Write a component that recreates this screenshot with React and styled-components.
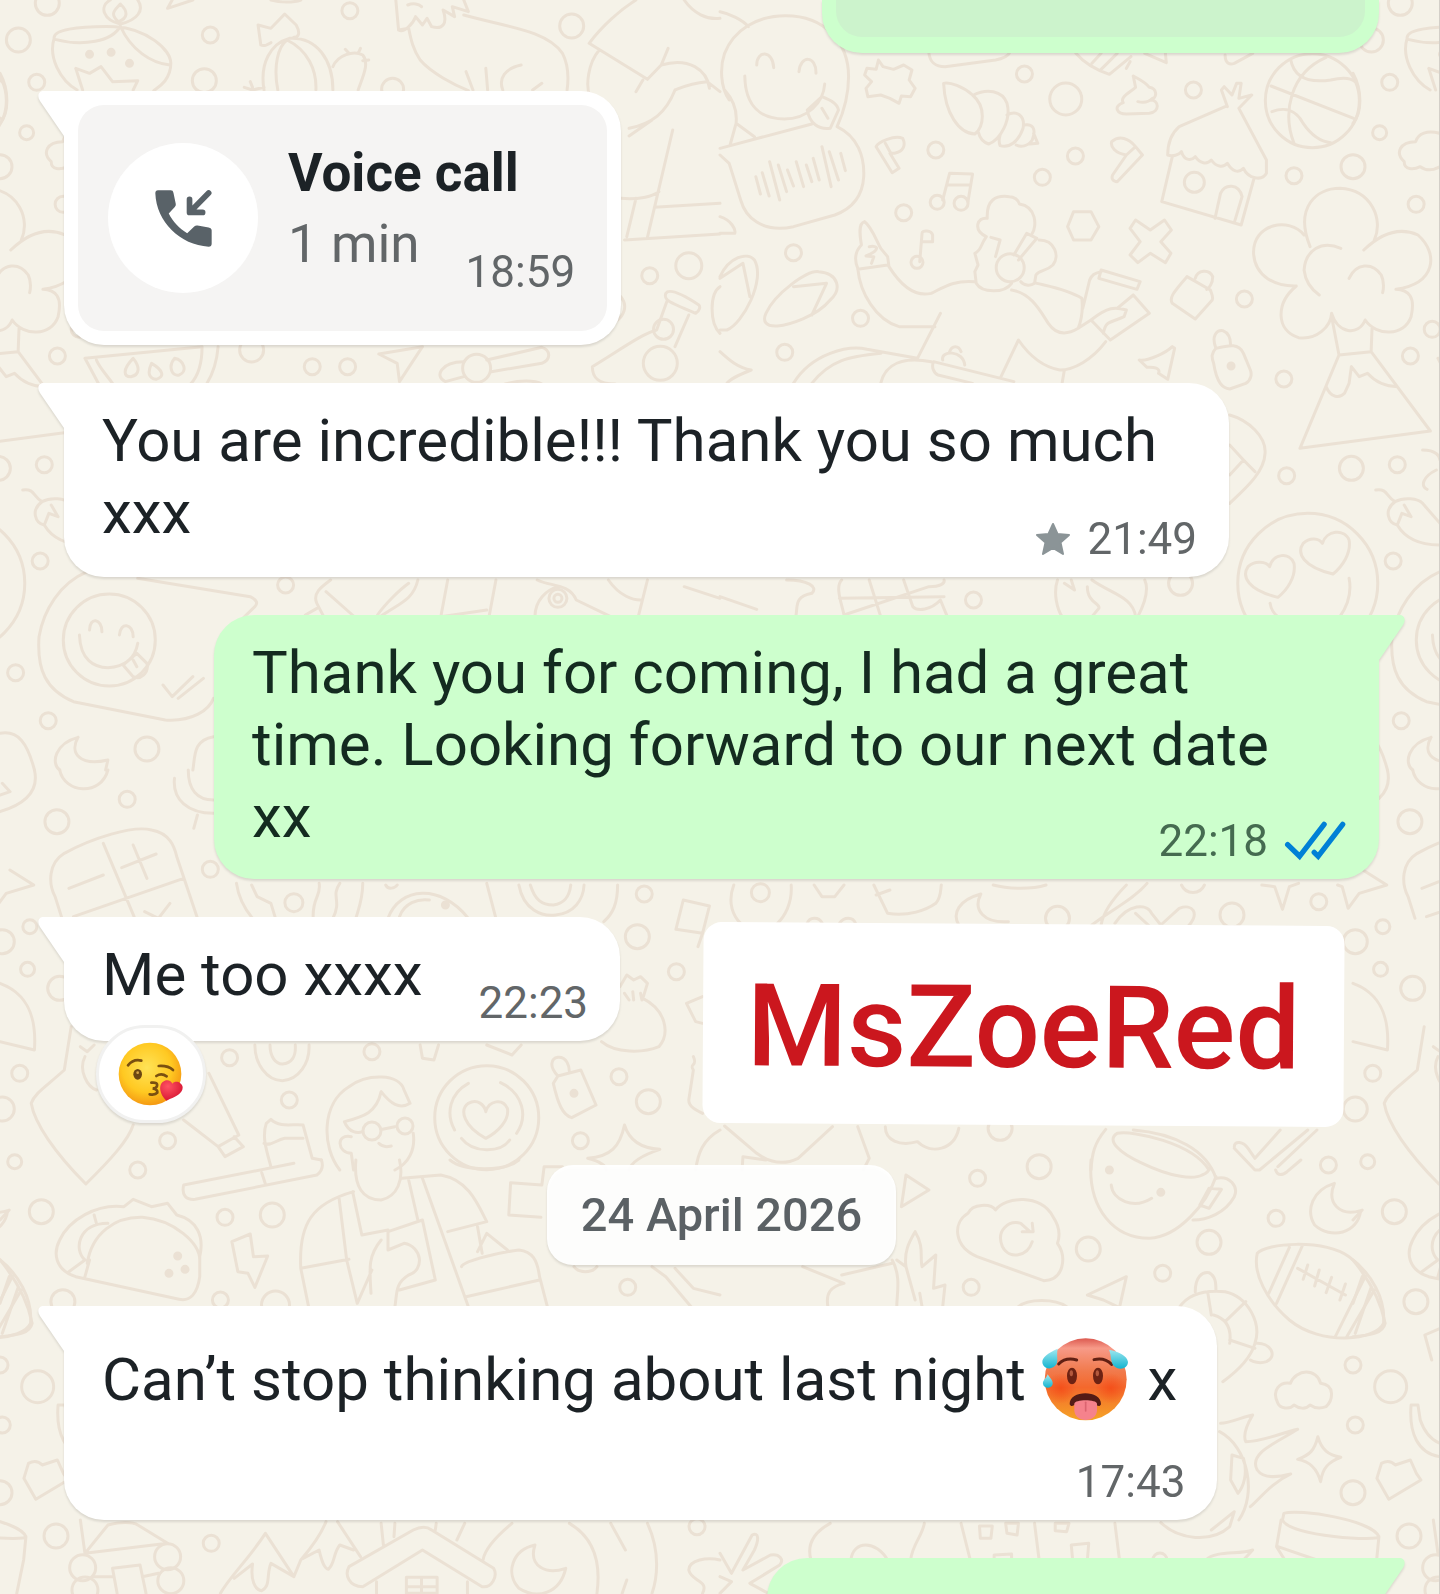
import React from 'react'
import styled, { createGlobalStyle, css } from 'styled-components'

const GlobalStyle = createGlobalStyle`
  * {
    box-sizing: border-box;
  }
  body {
    margin: 0;
    background: #f5f2e8;
    font-family: Roboto, 'Noto Sans', sans-serif;
  }
`

const Page = styled.main`
  position: relative;
  height: 100vh;
  overflow: hidden;
  background: #f5f2e8;
  border-right: 1px solid #d3cfc8;
`
const Wallpaper = styled.svg`
  position: absolute;
  inset: 0;
  width: 100%;
  height: 100%;
  fill: none;
  stroke: #ebe1d4;
  stroke-width: 3;
  stroke-linecap: round;
  stroke-linejoin: round;

  path {
    vector-effect: non-scaling-stroke;
  }
`
const Thread = styled.div`
  position: relative;
  display: flex;
  flex-direction: column;
  gap: 38px;
  padding: 0 60px 0 64px;
`
const Row = styled.div`
  display: flex;
  align-items: flex-start;
  justify-content: ${(p) => (p.$out ? 'flex-end' : 'flex-start')};
`
const Bubble = styled.article`
  position: relative;
  display: flex;
  flex-direction: ${(p) => (p.$inline ? 'row' : 'column')};
  gap: ${(p) => (p.$inline ? '56px' : '0')};
  max-width: min(100%, 1165px);
  padding: 22px 32px 12px 38px;
  border-radius: ${(p) => (p.$out ? '40px 0 40px 40px' : '0 40px 40px 40px')};
  background: ${(p) => (p.$out ? '#cdffcd' : '#ffffff')};
  color: ${(p) => (p.$out ? '#142b20' : '#1c2226')};
  filter: drop-shadow(0 2px 1px rgba(60, 50, 40, 0.14));
`
const TailShape = styled.svg`
  position: absolute;
  top: 0;
  width: 30px;
  height: 46px;
  ${(p) =>
    p.$out
      ? css`
          right: -26px;
          transform: scaleX(-1);
          fill: #cdffcd;
        `
      : css`
          left: -26px;
          fill: #ffffff;
        `}
`
const Text = styled.p`
  margin: 0;
  padding-top: ${(p) => (p.$roomy ? '16px' : '0')};
  padding-right: ${(p) => (p.$wide ? '30px' : p.$roomy ? '8px' : '0')};
  font-size: 60px;
  line-height: 72px;
`
const Meta = styled.div`
  display: flex;
  align-items: center;
  align-self: flex-end;
  gap: 16px;
  margin-top: ${(p) => p.$top}px;
  color: ${(p) => (p.$out ? '#456b50' : '#626668')};
  font-size: 44px;
  line-height: 52px;
`

/* call card */
const CallBubble = styled(Bubble)`
  padding: 14px;
`
const CallCard = styled.div`
  display: flex;
  align-items: center;
  gap: 30px;
  min-height: 226px;
  padding: 33px 32px 33px 30px;
  border-radius: 26px;
  background: #f5f4f3;
`
const CallIcon = styled.div`
  display: flex;
  align-items: center;
  justify-content: center;
  width: 150px;
  height: 150px;
  border-radius: 50%;
  background: #ffffff;
`
const CallInfo = styled.div`
  align-self: flex-start;
  line-height: 71px;
  font-size: 53px;
`
const CallTitle = styled.h2`
  margin: 0;
  font-size: 53px;
  font-weight: 700;
`
const CallLine = styled.div`
  display: flex;
  align-items: flex-end;
  gap: 46px;
  height: 71px;
  color: #626668;
`
const CallTime = styled(Meta)`
  margin-bottom: -18px;
`

const CutBubble = styled.div`
  width: 557px;
  padding: 0 14px 16px;
  border-radius: 0 0 40px 40px;
  background: #cdffcd;
  filter: drop-shadow(0 2px 1px rgba(60, 50, 40, 0.14));
`
const CutCard = styled.div`
  height: 37px;
  border-radius: 0 0 26px 26px;
  background: #ccf3cc;
`
const NextBubble = styled(Bubble)`
  width: 612px;
  min-height: 124px;
`

const Reaction = styled.button`
  position: absolute;
  left: 32px;
  top: calc(100% - 16px);
  display: flex;
  align-items: center;
  justify-content: center;
  width: 110px;
  height: 98px;
  padding: 0;
  border: 3px solid #f1f1f0;
  border-radius: 49px;
  background: #ffffff;
`
const InlineEmoji = styled.svg`
  width: 88px;
  height: 84px;
  margin: -12px 4px -12px 0;
  vertical-align: -9px;
`
const NameTag = styled.div`
  display: flex;
  align-items: center;
  justify-content: center;
  width: 641px;
  height: 201px;
  margin: 7px 35px 0 auto;
  padding-top: 6px;
  border-radius: 18px;
  background: #ffffff;
  color: #cb171e;
  font-size: 115px;
  font-weight: 500;
  transform: rotate(0.36deg);
`
const DateChip = styled.time`
  align-self: center;
  margin: 2px 0 3px;
  padding: 0 34px;
  border-radius: 26px;
  background: rgba(255, 255, 255, 0.94);
  color: #5b6165;
  font-size: 47px;
  font-weight: 500;
  line-height: 100px;
  filter: drop-shadow(0 2px 1px rgba(60, 50, 40, 0.14));
`

/* Wallpaper sheets: x/y is the sheet origin on the page, everything in it is
   drawn on a finer grid (see GRID_X, GRID_Y). rings are [x, y, radius]. */
const GRID_X = 720 / 1568
const GRID_Y = 1 / 3
const TILE = 1353

const sheets = [
  {
    x: 0,
    y: 0,
    rings: [[40, 120, 12], [80, 247, 8], [103, 10, 12], [458, 105, 8], [445, 242, 12], [762, 32, 8], [855, 268, 11], [1245, 78, 12], [58, 398, 7], [0, 500, 12], [125, 1068, 8], [548, 1050, 12], [680, 1100, 8], [757, 1100, 8], [1500, 797, 13], [1415, 827, 8], [1038, 1105, 14], [1445, 988, 10], [1438, 1090, 17]],
    dots: [[195, 163], [242, 157], [282, 190]],
    d: [
      'M118 115C115 90 165 78 250 80C320 85 372 150 372 190C372 240 345 262 335 272M118 115C105 170 130 240 168 270M120 118C180 140 245 125 262 78C285 150 330 190 370 195',
      'M262 72C225 60 215 20 240 0M262 72C300 60 315 30 300 0M258 65C235 40 255 25 262 12C280 35 278 55 258 65M180 270L165 205L195 220L220 200L245 245L300 242L290 270',
      'M375 0L365 25L420 0M590 0C610 8 640 8 655 0',
      'M575 270C565 190 590 130 630 115C690 110 725 180 725 270M605 270C595 200 605 140 625 120C670 150 690 210 688 270M590 128C582 135 575 140 568 135L562 75L590 85L620 42L645 75C655 100 650 112 640 112',
      'M725 200C735 165 770 150 790 165C805 190 790 230 780 270M752 148L760 160M785 145L780 160M803 180L790 182M532 262L550 270L575 262M545 245L550 262',
      'M862 0L868 90L890 85C895 120 900 150 915 180C940 220 990 255 1020 272M888 15C900 8 912 12 918 20M868 90C880 100 900 70 905 50L920 75L930 55L940 80C965 90 975 70 965 30L990 50L985 20L1020 35L1010 0',
      'M1010 45C1100 80 1190 90 1225 160C1240 200 1238 240 1235 270M1015 215L1030 270M1058 205L1062 270M1135 195C1100 205 1085 235 1095 270M1180 250L1160 270',
      'M1385 0C1350 30 1310 80 1283 130L1410 238L1440 195C1500 170 1540 210 1545 265M1385 275L1400 240M1305 150C1280 190 1275 260 1285 290M1455 145L1440 195M1490 0C1510 40 1540 60 1568 55',
      'M1568 275L1540 245C1500 250 1480 265 1470 270C1450 340 1420 370 1370 385M1370 408L1420 360M1465 390L1410 712M1385 595L1365 710M1352 595C1390 600 1420 590 1435 575M1360 720L1568 702M1425 622L1568 610',
      'M0 220C20 270 20 340 0 370',
      'M185 1075L440 1040C440 1090 430 1130 415 1152M185 1075L215 1152M475 1040C472 1090 460 1130 450 1152M210 1080C215 1100 235 1130 245 1150M290 1075C265 1110 270 1130 285 1130C305 1125 305 1100 290 1075ZM330 1090C320 1120 325 1135 340 1138C360 1130 355 1110 330 1090ZM380 1075C365 1100 375 1130 390 1125C410 1115 400 1080 380 1075Z',
      'M825 1062L920 1040L870 1145L865 1090ZM1060 1080L1180 1042C1200 1050 1200 1080 1180 1090L1070 1115M1010 1085C960 1085 945 1130 970 1145L1010 1130M1100 1152C1130 1140 1165 1140 1180 1152',
      'M1450 880C1445 900 1455 905 1515 940C1525 930 1525 920 1522 915C1470 868 1455 870 1450 880ZM1452 905L1430 990C1400 1000 1350 1050 1290 1100C1290 1130 1300 1152 1340 1152M1500 945L1470 1040M1352 890C1370 920 1355 950 1345 960M1568 860C1545 880 1545 970 1568 1000',
    ],
  },
  {
    x: 720,
    y: 0,
    rings: [[663, 222, 8], [753, 297, 16], [1031, 270, 8], [470, 450, 8], [774, 468, 8], [702, 532, 8], [400, 638, 8], [160, 758, 8], [1250, 527, 8], [1516, 613, 8], [1142, 897, 8], [306, 955, 8], [141, 1057, 8], [1228, 1137, 8], [1551, 988, 8], [1033, 547, 10], [1290, 302, 47], [473, 607, 7], [525, 610, 7], [429, 787, 6], [632, 803, 14]],
    dots: [[1113, 1098]],
    d: [
      'M20 300C0 260 0 200 10 160C30 90 80 47 143 47C230 47 280 130 280 230C280 290 268 340 255 380M80 195C80 150 115 150 117 203M172 215C175 165 210 165 209 220M54 228C55 320 90 357 140 357C190 357 225 310 228 252M190 330L222 290C240 300 255 310 258 330L240 385C215 390 195 370 190 330ZM222 325L235 355',
      'M0 35C20 40 50 60 62 80M10 270C30 300 38 330 35 370L22 435M35 370L75 410M0 445L200 372M255 380C300 410 315 470 313 530C310 600 280 630 250 645L160 680C90 700 55 650 45 600L20 490L0 465',
      'M78 530L88 582M92 518L107 588M108 485L130 600M127 495L145 575M147 510L160 558M166 485L182 560M188 495L200 545M203 475L216 540M222 440L242 560M238 455L258 540M263 460L273 512',
      'M345 180L355 200L378 208L400 195L418 210L412 240L425 265L415 290L395 288L390 310L370 295L350 285L322 290L318 265L330 245L315 225L320 205L340 208Z',
      'M455 160C458 190 470 200 490 200L600 180C620 175 628 165 630 160M775 160C800 200 830 215 848 223L895 170M810 190L830 160M830 208L865 160M885 205L893 185M925 160L972 188L970 160M1100 165C1100 190 1110 195 1120 190L1160 160',
      'M487 250C500 245 530 260 550 285C580 320 575 380 555 402C520 400 490 340 487 250ZM552 285C580 265 615 270 625 310C635 360 610 420 585 432C570 425 565 410 563 398M625 345C645 330 665 345 660 385C650 425 630 445 610 437C605 420 610 410 610 405M662 375C680 370 690 385 680 420C670 440 655 442 645 435M683 400L692 430L675 432',
      'M900 228L905 262C895 275 870 290 878 308C855 320 865 342 885 342L935 340C960 335 955 300 938 300C955 290 950 265 935 262C925 245 915 240 900 228M910 305C925 310 935 305 942 295',
      'M1100 320L1000 380C975 410 975 450 975 465C985 470 1000 465 1005 455C1010 480 1025 485 1035 470C1045 490 1060 495 1070 480C1080 500 1095 505 1105 490C1115 515 1130 520 1140 505C1150 535 1180 545 1190 520L1190 480L1130 325L1158 285L1130 295L1135 250L1125 250L1115 285L1098 260L1092 270L1105 320M985 470L962 605L1135 675L1162 540M1078 655L1090 580C1100 550 1130 550 1137 590L1120 668',
      'M1243 180C1250 230 1280 250 1330 240C1360 230 1375 235 1383 245M1200 258L1380 355M1320 172C1240 220 1225 340 1250 430M1202 335C1230 320 1255 330 1270 370C1290 410 1310 425 1330 428',
      'M1568 400C1540 390 1520 400 1515 425C1480 425 1470 460 1490 485C1490 510 1510 510 1525 500C1540 515 1555 510 1568 500',
      'M340 440C345 425 380 405 398 415C405 435 400 455 380 460L370 460L390 505L375 518ZM360 430L372 460M920 465L865 545C855 545 852 535 855 525L885 465C860 460 850 440 853 425C870 405 890 415 905 440ZM885 465L905 440',
      'M485 600L500 520L550 522L540 605M498 555L545 555M435 785L440 700C440 690 460 690 463 705L463 725L440 725M770 635L808 635L825 680L808 720L770 720L757 680Z',
      'M905 660L937 690L968 660L983 690L960 725L982 760L970 788L937 760L910 788L893 765L915 725L893 685Z',
      'M1017 830C985 880 978 895 985 910L1035 957L1072 900C1075 890 1070 880 1068 870ZM1035 835C1040 810 1065 805 1073 830C1073 850 1065 865 1060 868M1080 1045C1070 1060 1070 1070 1075 1090C1082 1150 1095 1165 1110 1167L1145 1150C1158 1140 1158 1120 1155 1110L1140 1060C1130 1030 1110 1035 1080 1045ZM1080 1045C1070 1010 1080 990 1095 992C1110 1000 1112 1020 1112 1035',
      'M913 1080C930 1085 970 1060 985 1040L990 1045L975 1138L955 1120C960 1105 945 1100 930 1102Z',
      'M0 830C20 770 60 755 75 780C100 840 50 970 15 990L0 990M0 835L50 790L65 890M100 940C120 880 190 810 215 815C260 820 265 870 240 900C210 950 150 975 125 978C100 980 92 965 100 940ZM160 860L232 850L200 945M0 650C25 660 35 690 32 700L0 700',
      'M315 665C330 680 340 720 350 745L365 770L368 800C400 870 430 890 460 880C490 860 510 840 555 845M315 665C300 670 305 710 308 735C290 760 295 790 300 805C305 880 340 960 390 980L468 980M300 808L365 795M325 740C345 735 350 750 318 768L335 770L330 790M480 940L430 1075',
      'M580 710C550 690 560 650 582 655C580 600 600 585 630 590C640 590 650 600 652 612C690 620 690 680 680 700M580 710C565 740 570 750 555 760L562 795L555 815L558 850C570 880 620 880 635 850M590 712L610 720L600 770M640 765L668 700L690 715L650 780M695 720C730 720 740 770 725 795C710 815 695 810 688 825L685 850C675 860 660 855 655 845',
      'M635 870C680 880 700 940 715 970C730 1000 750 1010 780 985C790 950 790 920 788 895C760 870 720 860 690 850M790 925L805 840C810 825 815 820 830 815M830 810L915 845L908 868L825 835ZM780 985L808 960M900 885L935 940L850 1020L808 960M835 1000C840 960 850 970 880 950L885 930C860 920 845 920 808 960M900 885L865 925M840 1025C810 1080 770 1110 740 1110C700 1100 670 1060 650 1020L612 1130M750 1110L745 1150',
      'M160 1150C200 1060 280 1035 320 1048L430 1075M200 1150C240 1080 280 1070 350 1060M350 1150C360 1090 400 1070 460 1085M640 1145L465 1085C460 1100 465 1120 475 1125L550 1150M485 1080C480 1050 530 1050 533 1095M500 1055C505 1035 520 1035 525 1055M0 1055C20 1080 40 1105 68 1110C40 1125 20 1140 15 1150',
      'M1285 740C1250 620 1300 565 1350 565C1420 570 1445 660 1425 720M1272 705C1240 650 1160 670 1162 760C1165 830 1210 860 1255 858C1210 910 1210 990 1260 1013C1300 1020 1330 980 1332 940C1345 1000 1390 1010 1405 960C1430 1010 1490 1010 1505 950C1515 890 1500 870 1472 868C1560 850 1565 760 1520 705C1480 680 1440 700 1402 750M1352 745C1310 720 1275 750 1272 810C1275 850 1290 870 1305 885M1370 835C1385 790 1420 785 1440 825C1447 845 1445 870 1443 878',
      'M1332 950L1348 1065L1418 1055L1420 985M1348 1065L1263 1345L1547 1293L1418 1055M1375 1100L1370 1150L1360 1180C1350 1195 1330 1195 1320 1160M1375 1100L1392 1130L1410 1120C1430 1150 1450 1160 1475 1160',
    ],
  },
  {
    x: 0,
    y: 370,
    rings: [[34, 908, 8], [105, 1052, 8], [320, 1137, 12], [622, 645, 8], [238, 810, 46], [1215, 685, 9], [1215, 685, 4]],
    dots: [],
    d: [
      'M190 605C130 640 95 720 85 800C80 900 100 960 160 995L360 1050C420 1055 455 1020 465 985M300 625L545 680C560 690 562 700 555 710L525 750M195 780C195 740 222 745 222 785M260 795C262 755 290 760 290 800M173 795C175 870 205 893 235 893C275 890 295 860 300 820M268 885L298 850L320 880C325 910 305 930 290 920ZM290 870L298 890M355 945L375 980L420 920M388 985L443 925',
      'M0 1090C40 1080 60 1120 75 1200M170 1102C120 1120 110 1180 130 1200M170 1102C150 1150 175 1190 235 1170L230 1200M465 1100C420 1110 425 1160 420 1200',
      'M720 630C700 650 680 670 690 700L705 740M710 665L770 738M665 735L690 715M910 630C900 690 870 700 830 738M890 640C870 660 840 700 822 735M975 630L960 740L1060 720M1080 630L1065 740',
      'M1170 630C1200 650 1240 640 1255 690L1330 740M1165 740C1165 690 1190 660 1215 650M1325 630C1350 680 1380 690 1395 690M1410 630L1390 740M1490 650L1568 685',
    ],
  },
  {
    x: 720,
    y: 370,
    rings: [[1375, 295, 12], [1475, 284, 8], [1234, 317, 8], [1466, 573, 8], [1280, 640, 70], [552, 690, 8], [1003, 640, 12]],
    dots: [],
    d: [
      'M1428 360C1455 355 1450 380 1470 395C1445 420 1455 460 1475 465C1490 500 1520 525 1568 525M1470 395C1490 380 1520 385 1530 400L1568 460M1490 405L1505 440L1485 430L1475 465M1530 240C1560 240 1568 260 1568 270M1560 300C1530 320 1525 350 1540 358',
      'M1215 682C1150 660 1135 620 1150 590C1165 570 1190 575 1197 590C1205 550 1240 545 1250 580C1255 620 1235 660 1215 682ZM1335 612C1270 590 1255 550 1270 520C1285 500 1305 505 1312 520C1320 480 1360 475 1370 510C1375 550 1355 590 1335 612ZM1198 700C1200 720 1210 735 1215 740M1370 625C1375 660 1370 700 1350 740',
      'M0 680L80 718M145 630C190 630 215 650 200 670C160 680 170 710 165 740M265 630C250 650 265 700 270 735L455 650C480 650 490 640 488 630M325 630L350 740M260 685L488 680M400 630L420 710C430 725 460 720 480 690L495 740',
      'M735 630C725 670 735 720 745 740M765 630L772 660L750 640M800 650C800 700 830 700 825 715L810 740M810 630C850 670 900 680 905 740M925 630C935 660 925 700 910 740',
      'M1110 135C1150 150 1190 200 1187 250C1185 310 1140 360 1110 400M1110 315L1140 270L1165 305M1110 225L1140 270',
    ],
  },
  {
    x: 0,
    y: 770,
    rings: [[124, 155, 12], [277, 88, 8], [458, 298, 8], [60, 598, 7], [5, 515, 12], [65, 470, 7], [130, 655, 12], [43, 910, 8], [5, 1017, 12], [365, 1112, 8], [32, 1175, 7], [500, 863, 8], [630, 990, 8], [810, 845, 8], [1403, 372, 8], [1388, 500, 12], [1473, 605, 8], [1412, 995, 12], [1348, 920, 8], [1264, 1112, 8], [640, 398, 9], [810, 1083, 9], [882, 1068, 8], [1060, 1043, 52]],
    dots: [[970, 405], [1250, 970]],
    d: [
      'M75 0C85 60 60 100 0 125M5 40L22 65L0 75M130 0C140 70 220 80 235 0M380 25C375 90 410 130 465 130M410 0C410 60 430 90 465 90M430 135L422 175',
      'M140 250C200 205 290 165 330 180C370 190 380 230 385 260L430 445M140 250C105 280 105 340 120 380L135 445M225 220L292 440M160 440L400 325M150 355L225 315M265 293L340 252M290 225L320 325M315 425L345 445L370 400',
      'M515 340C520 390 535 420 550 445M548 345L560 380L590 400L600 445M695 340C700 380 680 380 682 445M740 340C720 380 745 390 725 445M790 340C790 390 780 420 775 445M840 345C845 360 860 355 865 345M845 445C870 350 960 340 1020 445M870 440C880 400 910 385 935 390M1060 340L1080 445',
      'M1130 345C1140 420 1180 440 1210 435C1250 430 1270 390 1272 345M1155 345C1165 390 1180 405 1205 405C1230 400 1240 380 1243 345M1345 345C1345 400 1335 430 1315 455M1488 390L1545 408L1530 490L1472 478ZM1530 490L1520 530M1530 680L1495 700L1515 755L1530 760',
      'M1350 650L1365 615L1380 630L1395 620L1410 640L1400 685C1450 720 1460 790 1435 830C1400 850 1340 850 1310 815M1360 670L1370 690M1378 665L1380 690M1395 670L1398 690',
      'M740 1200C700 1130 700 1000 760 950C800 910 870 910 880 960L893 1000C870 1020 850 1000 830 965C820 1030 790 1040 750 1055C760 1090 780 1090 790 1085M833 1078L860 1070M765 1100C730 1090 735 1150 765 1150L770 1200M900 1090C905 1140 890 1180 860 1200M825 1120C835 1135 845 1130 852 1128',
      'M1058 1105C1010 1070 1000 1020 1020 1000C1040 985 1055 1005 1058 1025C1065 990 1095 985 1105 1015C1110 1050 1085 1085 1058 1105ZM1020 940C980 970 970 1030 990 1080M1090 938C1140 970 1150 1040 1125 1090M1005 1105C1030 1150 1090 1150 1110 1110',
      'M1215 918C1195 890 1200 865 1215 862C1235 860 1240 890 1240 905M1215 918L1265 900L1298 1005L1245 1043C1225 1035 1215 1000 1205 940ZM555 825C555 880 580 932 615 932C650 930 675 880 673 825M588 825C588 860 600 882 615 882C635 880 645 860 643 825M915 825L920 865L945 870L955 825M1060 825L1115 855L1135 825',
      'M155 770L140 900C100 950 75 970 68 1000C75 1060 120 1150 187 1242C240 1170 280 1110 290 1065M400 1050L475 1130L520 1095L455 910M475 1130L490 1160L530 1130L510 1100M175 830L190 845L205 825M185 860C170 900 190 950 210 960M0 640C60 670 80 740 75 840L0 815',
      'M590 1190C580 1140 570 1100 580 1060L590 1048C610 1075 640 1060 660 1065L680 1165L700 1170M575 1120C590 1130 600 1110 620 1105L660 1105M1510 860C1520 890 1500 880 1510 900L1500 990C1500 1010 1515 1020 1530 1030',
      'M1320 1200C1320 1190 1310 1175 1280 1165C1330 1160 1350 1130 1360 1065C1370 1110 1395 1135 1437 1138C1400 1155 1375 1175 1370 1200M1568 1080C1530 1110 1520 1150 1515 1200',
    ],
  },
  {
    x: 720,
    y: 770,
    rings: [[88, 368, 9], [735, 445, 12], [1115, 435, 12], [1304, 395, 8], [610, 1075, 12]],
    dots: [],
    d: [
      'M30 345C15 400 30 440 45 460M155 345C158 400 140 440 125 460M205 345L222 380L250 380L270 345M335 345L365 430C410 440 450 420 470 400C482 380 480 360 482 345M340 375L370 360M595 345C630 358 680 358 710 345M568 372C520 390 505 430 520 465M568 372C550 420 575 460 628 455M190 460C195 440 215 440 222 458M260 460C270 440 290 440 295 460',
      'M930 340C900 390 850 420 810 465M885 345C860 380 835 420 830 465M860 460C890 400 930 400 940 430L960 465L1000 415C1030 400 1045 430 1020 468M905 430L935 468M1005 345C1015 375 1045 375 1055 345M1180 345L1208 350L1225 418L1240 350L1260 340M1345 345L1355 350L1368 415L1392 370L1452 345L1400 300',
      'M10 1068L80 1150C110 1180 140 1185 170 1165L245 1070M300 1070L325 1165L312 1200M360 1070C360 1110 390 1130 430 1115C460 1155 510 1140 520 1075M48 1200L50 1160L100 1170',
      'M840 1078C815 1120 810 1150 808 1200M865 1090C900 1080 1030 1120 1065 1200M865 1090C840 1110 870 1150 920 1180C980 1220 1030 1230 1050 1215C1060 1210 1065 1205 1065 1195M900 1080C990 1090 1060 1140 1080 1225',
      'M1120 1130C1120 1110 1140 1115 1150 1135L1165 1165L1220 1080M1120 1135L1165 1200L1175 1200L1280 1080M1215 1190L1300 1080',
    ],
  },
  {
    x: 0,
    y: 1160,
    rings: [[90, 155, 12], [300, 30, 8], [490, 172, 8], [593, 165, 12], [137, 425, 12], [480, 420, 8], [600, 435, 14], [0, 615, 8], [82, 680, 16], [5, 795, 8], [0, 998, 12], [122, 1128, 12], [460, 1150, 8], [1367, 382, 8], [1518, 1100, 8], [180, 1223, 13], [365, 1190, 13], [185, 1290, 13], [372, 1262, 13]],
    dots: [[387, 288], [403, 328], [368, 340]],
    d: [
      'M640 10L400 75C395 105 405 120 425 118L690 45C700 35 705 20 700 0M570 38L578 72',
      'M165 350C120 330 115 280 130 240C150 180 210 130 270 140L290 118L330 140L365 130L385 165C430 180 445 230 435 290L435 350C430 400 415 425 390 418L165 350M190 310C200 220 250 170 310 172C380 180 435 250 435 300M235 190C170 190 160 270 185 300L150 335M185 350L195 300M205 165L210 190',
      'M505 245L545 222L552 290L583 288L555 382L540 340L518 335Z',
      'M770 95C680 130 650 190 655 325L672 440M655 325L760 298M738 110L755 300L778 430L810 330M768 95L788 225L845 210M775 0C770 80 790 120 830 120C865 110 880 60 870 0M875 55L960 45C1020 60 1040 130 1060 185L975 215M890 60L910 180M920 55L1020 440M845 215L920 180L948 360L870 390M845 215L845 270L880 250C920 260 925 330 890 345C860 370 865 400 860 440M830 240C800 290 805 330 808 400M1040 200L1050 280M1040 275L1060 220L1105 270M1005 320C1010 300 1100 275 1130 270C1160 275 1170 300 1175 350L1192 440M1015 410L1175 360',
      'M1225 20L1185 20L1180 75L1112 68L1108 165L1178 172M980 0C1010 35 1100 35 1130 0M0 300C30 350 60 420 70 490C65 520 40 525 0 530M20 350L0 430M40 380L5 520M0 180L20 150',
      'M62 910C75 900 85 905 92 915L125 900L138 940L148 960L78 1018L52 955ZM1250 320C1260 340 1290 340 1300 320M1420 320L1450 350L1505 440M1470 325L1510 385L1568 405',
      'M175 1080L185 1180L235 1095C260 1085 290 1085 300 1095L365 1150L185 1180M245 1225L305 1215L318 1300M245 1225L255 1300M205 1250L245 1250M310 1250L345 1240',
      'M480 1300C500 1250 540 1200 578 1120L640 1250L655 1200C680 1160 700 1120 710 1085M510 1255L550 1212C545 1260 555 1290 570 1292C590 1280 580 1240 590 1210L640 1250M660 1195L695 1170C700 1200 705 1225 715 1228C730 1210 725 1180 740 1155L770 1170M735 1085L785 1190',
      'M760 1220L900 1110C915 1100 930 1100 940 1110L1075 1225C1085 1250 1070 1285 1050 1280L920 1170L790 1280C760 1280 750 1245 760 1220ZM820 1265L820 1300M1018 1265L1018 1300M885 1252L952 1252L952 1300L885 1300ZM918 1252L918 1300M885 1280L952 1280M830 1090L835 1155M860 1090L858 1130M950 1090L948 1110M1012 1090L995 1140',
      'M1115 1090C1080 1130 1055 1170 1052 1200M1240 1090C1290 1130 1310 1200 1300 1300M1165 1155C1115 1170 1100 1240 1130 1285C1170 1320 1220 1300 1232 1225C1190 1245 1150 1220 1165 1155ZM1410 1090C1440 1180 1430 1260 1420 1300M1330 1090L1362 1170M1365 1260L1355 1300M1568 1200C1540 1190 1500 1200 1500 1230C1505 1265 1545 1260 1530 1300',
    ],
  },
  {
    x: 720,
    y: 1160,
    rings: [[561, 55, 8], [695, 20, 12], [802, 267, 12], [1065, 247, 12], [1211, 175, 8], [964, 340, 8], [547, 382, 8], [1325, 15, 8], [958, 1200, 7]],
    dots: [[848, 30], [960, 97]],
    d: [
      'M405 45L455 90L395 140ZM540 160C550 130 590 130 600 150C620 110 700 100 725 170C740 200 740 230 735 250C755 290 750 360 705 362L560 290C510 260 505 190 540 160ZM680 245C670 290 630 300 615 260C600 210 630 180 655 190L675 215M680 190L682 215L658 215',
      'M808 0C800 150 860 235 935 235C1000 230 1060 130 1080 50M852 75C855 120 900 150 940 115M1080 55C1110 45 1130 80 1120 110C1100 160 1060 180 1030 180M1065 85L1092 88L1065 145L1045 135ZM1210 30C1215 50 1225 45 1235 35L1265 0',
      'M1338 70C1290 90 1275 150 1295 195C1330 240 1390 220 1395 152C1350 170 1320 130 1338 70Z',
      'M1170 280C1190 250 1310 235 1370 290C1420 340 1450 420 1445 490C1430 540 1310 560 1240 480C1190 420 1160 340 1170 280ZM1240 262L1195 400M1268 258L1212 430M1405 350L1340 530M1425 390L1365 530M1258 325L1362 405M1280 315L1270 358M1305 330L1295 378M1332 352L1320 398M1362 372L1350 420',
      'M1000 443C1020 400 1060 390 1100 395C1150 410 1180 490 1165 550C1155 600 1120 640 1095 665M1035 395C1035 350 1050 335 1065 338C1080 350 1080 370 1080 390M1075 465C1100 475 1115 500 1110 550M1145 425L1100 485M1062 395L1070 465M1110 540L1165 565M1165 550C1200 545 1215 590 1190 605C1175 612 1160 605 1155 600',
      'M885 350L800 405L835 420L870 443ZM1215 730C1200 690 1220 665 1242 670C1255 625 1300 625 1308 670C1340 675 1335 720 1320 740C1300 750 1290 740 1285 735C1275 750 1260 745 1250 735C1240 750 1220 745 1215 730Z',
      'M1568 850C1550 840 1535 820 1525 780L1520 735L1505 735C1500 820 1520 880 1568 890M1568 505L1535 525L1550 600',
      'M1090 790C1110 790 1140 770 1160 765C1145 800 1140 830 1145 845C1180 845 1220 820 1258 808C1210 850 1150 880 1170 930C1185 960 1220 950 1243 942C1200 970 1180 1010 1155 1040M1088 815C1150 860 1170 1000 1130 1080M1115 885L1140 895C1150 940 1140 980 1128 1000L1112 960ZM960 1088C1000 1140 1070 1150 1110 1100L1120 1055L1070 1110',
      'M1302 830C1310 870 1325 885 1352 892C1325 905 1312 925 1308 965C1300 925 1285 905 1258 898C1285 885 1295 870 1302 830ZM1228 1060C1260 1045 1420 1080 1435 1130C1440 1145 1240 1130 1225 1080ZM1222 1080L1212 1160L1230 1200M1435 1130L1430 1200L1415 1300M1215 1160L1300 1200',
      'M375 300C395 350 385 400 385 440M385 300L405 320C400 270 415 240 425 215C445 260 435 290 440 320L470 285L465 385L490 375L485 440M405 320L425 420M435 400L440 440M180 320L270 370C240 380 230 400 235 440M265 345L375 310M650 440C670 415 730 415 755 440',
      'M240 1090C200 1120 190 1160 198 1200M445 1090C440 1130 420 1150 415 1200M285 1200C290 1140 340 1140 365 1200M525 1090L545 1200M685 1090L695 1200M860 1090L870 1200M565 1098L593 1098L590 1135L567 1135ZM622 1090L650 1090L647 1125L625 1120ZM730 1090L760 1090L755 1115L730 1112ZM768 1200L765 1155L803 1150L800 1200M597 1200L597 1185L635 1182L635 1200M1058 1200C1080 1170 1130 1185 1160 1170L1140 1200',
      'M0 1180L25 1240L70 1125C85 1115 85 1140 75 1170L50 1230L110 1185C130 1180 140 1200 130 1215L65 1270L105 1300M0 1300L25 1265L0 1250',
    ],
  },
]

const Doodles = () => (
  <Wallpaper aria-hidden="true">
    <g id="doodles">
      {sheets.map((s) => (
        <g key={`${s.x}-${s.y}`} transform={`translate(${s.x} ${s.y})`}>
          <path transform={`scale(${GRID_X} ${GRID_Y})`} d={s.d.join('')} />
          {s.rings.map(([x, y, r]) => (
            <circle key={`${x}-${y}-${r}`} cx={x * GRID_X} cy={y * GRID_Y} r={r} />
          ))}
          {s.dots.map(([x, y]) => (
            <circle key={`${x}-${y}`} cx={x * GRID_X} cy={y * GRID_Y} r="3" fill="#ebe1d4" />
          ))}
        </g>
      ))}
    </g>
    <use href="#doodles" x={-TILE} />
    <use href="#doodles" x={TILE} />
  </Wallpaper>
)

const Tail = ({ out }) => (
  <TailShape $out={out} viewBox="0 0 30 46" aria-hidden="true">
    <path d="M30 0H6C0 0 -1 5 2 10L26 45H30Z" />
  </TailShape>
)

const IncomingCall = () => (
  <svg width="57" height="57" viewBox="0 0 170 170" fill="#596268" aria-hidden="true">
    <path d="M9 1H47Q54 1 55 8L62 42Q63 47 59 51L41 70C53 94 72 114 96 129L117 109Q121 105 127 106L160 112Q169 114 169 121V160Q169 169 160 169C75 165 4 95 1 10Q1 1 9 1Z" />
    <path d="M160 9L108 62M103 28V67H142" fill="none" stroke="#596268" strokeWidth="17" strokeLinecap="round" strokeLinejoin="round" />
  </svg>
)

const Star = () => (
  <svg width="36" height="34" viewBox="0 0 36 34" fill="#8b9497" stroke="#8b9497" strokeWidth="2" strokeLinejoin="round" aria-label="Starred">
    <path d="M18 2L22.500 12L34 13L25.500 20.500L28 32L18 26L8 32L10.500 20.500L2 13L13.500 12Z" />
  </svg>
)

const ReadTicks = () => (
  <svg width="63" height="40" viewBox="400 55 190 120" fill="none" stroke="#0080d6" strokeWidth="16" strokeLinecap="round" aria-label="Read">
    <path d="M411 126L447 161L521 65M491 149L503 161L577 65" />
  </svg>
)

const KissEmoji = () => (
  <svg width="66" height="64" viewBox="0 0 198 192" role="img" aria-label="Face blowing a kiss">
    <defs>
      <radialGradient id="kissFace" cx="0.45" cy="0.4" r="0.6">
        <stop offset="0" stopColor="#ffe357" />
        <stop offset="0.65" stopColor="#ffc922" />
        <stop offset="1" stopColor="#f59a12" />
      </radialGradient>
      <radialGradient id="kissHeart" cx="0.35" cy="0.3" r="0.8">
        <stop offset="0" stopColor="#ff5263" />
        <stop offset="1" stopColor="#d3102e" />
      </radialGradient>
    </defs>
    <circle cx="96" cy="96" r="94" fill="url(#kissFace)" />
    <g fill="none" stroke="#7a5010" strokeWidth="8" strokeLinecap="round">
      <path d="M30 70Q46 50 70 56M122 72Q150 70 165 84M115 102Q130 92 146 103M100 122Q120 120 117 132Q114 140 104 139Q120 142 118 152Q112 160 95 157" />
    </g>
    <ellipse cx="59" cy="97" rx="13" ry="16" fill="#6b4712" />
    <circle cx="59" cy="92" r="4" fill="#d7a64a" />
    <path d="M145 176C124 156 122 132 133 121C145 110 159 115 163 125C172 114 191 120 194 135C195 155 174 163 145 176Z" fill="url(#kissHeart)" />
  </svg>
)

const HotEmoji = () => (
  <InlineEmoji viewBox="46 56 264 252" role="img" aria-label="Hot face">
    <defs>
      <linearGradient id="hotFace" x1="0" y1="0" x2="0" y2="1">
        <stop offset="0" stopColor="#dc5a50" />
        <stop offset="0.12" stopColor="#f79a88" />
        <stop offset="0.4" stopColor="#f17a4c" />
        <stop offset="0.6" stopColor="#f4682c" />
        <stop offset="1" stopColor="#f5a427" />
      </linearGradient>
      <radialGradient id="hotCheek">
        <stop offset="0" stopColor="#f4400f" stopOpacity="0.6" />
        <stop offset="1" stopColor="#f4400f" stopOpacity="0" />
      </radialGradient>
      <linearGradient id="hotDrop" x1="0" y1="0" x2="0" y2="1">
        <stop offset="0" stopColor="#a4e9f0" />
        <stop offset="1" stopColor="#12b4d0" />
      </linearGradient>
    </defs>
    <circle cx="180" cy="183" r="123" fill="url(#hotFace)" />
    <circle cx="105" cy="210" r="46" fill="url(#hotCheek)" />
    <circle cx="255" cy="210" r="46" fill="url(#hotCheek)" />
    <path d="M99 137Q120 116 153 125M205 124Q236 116 258 138" fill="none" stroke="#612013" strokeWidth="9" strokeLinecap="round" />
    <ellipse cx="139" cy="173" rx="15" ry="25" fill="#6d2213" />
    <ellipse cx="217" cy="173" rx="15" ry="25" fill="#6d2213" />
    <ellipse cx="137" cy="165" rx="5" ry="9" fill="#b4593d" />
    <ellipse cx="215" cy="165" rx="5" ry="9" fill="#b4593d" />
    <path d="M132 258C130 214 228 214 226 258C222 268 212 262 208 254H150C146 262 136 268 132 258Z" fill="#541b16" />
    <path d="M146 256C146 242 214 242 214 256V278C210 314 150 314 146 278Z" fill="#f5828c" />
    <path d="M180 252V278" stroke="#dc6470" strokeWidth="5" strokeLinecap="round" />
    <path d="M96 91C68 104 49 116 50 132C52 153 80 157 92 138C98 126 92 113 96 91ZM250 94C277 98 306 113 307 131C306 153 278 157 264 142C254 130 258 114 250 94Z" fill="url(#hotDrop)" />
    <path d="M66 168C72 178 83 187 81 197C78 212 55 212 52 197C50 187 62 180 66 168Z" fill="url(#hotDrop)" />
  </InlineEmoji>
)

const App = () => {
  return (
    <>
      <GlobalStyle />
      <Page>
        <Doodles />
        <Thread>
          <Row $out>
            <CutBubble>
              <CutCard />
            </CutBubble>
          </Row>

          <Row>
            <CallBubble>
              <Tail />
              <CallCard>
                <CallIcon>
                  <IncomingCall />
                </CallIcon>
                <CallInfo>
                  <CallTitle>Voice call</CallTitle>
                  <CallLine>
                    <span>1 min</span>
                    <CallTime $top={0}>18:59</CallTime>
                  </CallLine>
                </CallInfo>
              </CallCard>
            </CallBubble>
          </Row>

          <Row>
            <Bubble>
              <Tail />
              <Text $wide>You are incredible!!! Thank you so much xxx</Text>
              <Meta $top={-36}>
                <Star />
                <span>21:49</span>
              </Meta>
            </Bubble>
          </Row>

          <Row $out>
            <Bubble $out>
              <Tail out />
              <Text $wide>Thank you for coming, I had a great time. Looking forward to our next date xx</Text>
              <Meta $out $top={-38}>
                <span>22:18</span>
                <ReadTicks />
              </Meta>
            </Bubble>
          </Row>

          <Row>
            <Bubble $inline>
              <Tail />
              <Text>Me too xxxx</Text>
              <Meta $top={38}>22:23</Meta>
              <Reaction type="button" aria-label="Reaction">
                <KissEmoji />
              </Reaction>
            </Bubble>
            <NameTag>MsZoeRed</NameTag>
          </Row>

          <DateChip dateTime="2026-04-24">24 April 2026</DateChip>

          <Row>
            <Bubble>
              <Tail />
              <Text $roomy>
                Can’t stop thinking about last night <HotEmoji /> x
              </Text>
              <Meta $top={40}>17:43</Meta>
            </Bubble>
          </Row>

          <Row $out>
            <NextBubble $out>
              <Tail out />
            </NextBubble>
          </Row>
        </Thread>
      </Page>
    </>
  )
}

export default App
